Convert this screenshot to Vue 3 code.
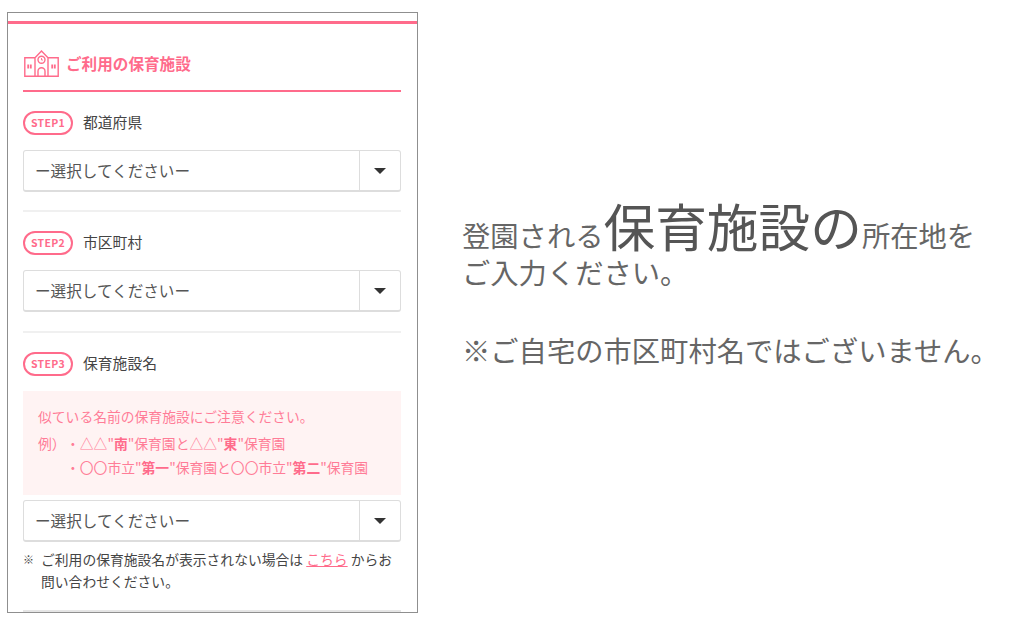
<script setup>
const note = 'ー選択してくださいー'
</script>

<template>
  <div class="page">
    <section class="card">
      <div class="topline"></div>
      <h2 class="title">
        <svg class="school" viewBox="0 0 35 27" fill="none" stroke="#ff6b8b" stroke-width="1.4">
          <path d="M11 7.7H.8v18.6h33.4V7.7H24M11 26.3V7.8L17.5 1 24 7.8v18.5" />
          <circle cx="17.5" cy="9.8" r="3.5" />
          <path d="M17.5 8v2h1.5" stroke-width=".9" />
          <path d="M14 26.3v-5a3.5 3.5 0 0 1 7 0v5" />
          <path d="M4.2 14.5v4M6.8 14.5v4M28.2 14.5v4M30.8 14.5v4" stroke-width="1.8" />
        </svg>
        <span>ご利用の保育施設</span>
      </h2>

      <div class="step first">
        <div class="step-head"><span class="badge">STEP1</span><span class="label">都道府県</span></div>
        <div class="select"><span class="value">{{ note }}</span><span class="arrow"><i></i></span></div>
      </div>

      <div class="step second">
        <div class="step-head"><span class="badge">STEP2</span><span class="label">市区町村</span></div>
        <div class="select"><span class="value">{{ note }}</span><span class="arrow"><i></i></span></div>
      </div>

      <div class="step last">
        <div class="step-head"><span class="badge">STEP3</span><span class="label">保育施設名</span></div>
        <div class="caution">
          <p class="c1">似ている名前の保育施設にご注意ください。</p>
          <p class="c2"><span class="rei">例）</span><span>・△△"<b>南</b>"保育園と△△"<b>東</b>"保育園</span></p>
          <p class="c3"><span>・〇〇市立"<b>第一</b>"保育園と〇〇市立"<b>第二</b>"保育園</span></p>
        </div>
        <div class="select tight"><span class="value">{{ note }}</span><span class="arrow"><i></i></span></div>
        <p class="foot"><span class="mark">※</span><span>ご利用の保育施設名が表示されない場合は <a>こちら</a> からお問い合わせください。</span></p>
      </div>
      <div class="tail"></div>
    </section>

    <section class="message">
      <p class="m1">登園される<span class="big">保育施設の</span>所在地を<br>ご入力ください。</p>
      <p class="m2">※ご自宅の市区町村名ではございません。</p>
    </section>
  </div>
</template>

<style>
html, body { margin: 0; background: #fff; }
</style>

<style scoped>
.page {
  width: 1014px;
  height: 624px;
  box-sizing: border-box;
  padding: 12px 0 0 7px;
  display: flex;
  overflow: hidden;
  font-family: "Noto Sans CJK JP", "Noto Sans", sans-serif;
  color: #444;
}
p, h2 { margin: 0; font-weight: normal; }

.card {
  width: 411px;
  height: 601px;
  flex: none;
  box-sizing: border-box;
  border: 1px solid #8f8f8f;
  padding: 8px 16px 0 15px;
  overflow: hidden;
  background: #fff;
}
.topline {
  height: 3px;
  margin: 0 -16px 0 -15px;
  background: #ff6b8b;
}
.title {
  height: 68px;
  border-bottom: 2px solid #ff6b8b;
  box-sizing: border-box;
  display: flex;
  align-items: center;
  gap: 7px;
  padding: 12px 0 0 1px;
  color: #ff6b8b;
  font-size: 15.6px;
  font-weight: 700;
  line-height: 20px;
}
.school { width: 35px; height: 27px; flex: none; }

.step { padding: 19px 0 18px; border-bottom: 2px solid #f0f0f0; }
.step.second { padding-bottom: 19px; }
.step.last { border-bottom: 0; padding-bottom: 0; }

.step-head { display: flex; align-items: center; gap: 10px; height: 24px; }
.badge {
  width: 50px;
  height: 24px;
  box-sizing: border-box;
  border: 2px solid #ff6b8b;
  border-radius: 12px;
  color: #ff6b8b;
  font-size: 10.5px;
  font-weight: 700;
  line-height: 20px;
  text-align: center;
  letter-spacing: .3px;
}
.label { font-size: 14.8px; line-height: 18px; padding-bottom: 2px; font-weight: 400; color: #444; }

.select {
  margin-top: 15px;
  height: 42px;
  box-sizing: border-box;
  border: 1px solid #ddd;
  border-bottom-width: 2px;
  border-radius: 3px;
  display: flex;
  background: #fff;
}
.select.tight { margin-top: 5px; }
.value {
  flex: 1;
  padding-left: 11px;
  font-size: 15.6px;
  line-height: 39px;
  color: #555;
}
.arrow {
  width: 40px;
  border-left: 1px solid #ddd;
  display: flex;
  align-items: center;
  justify-content: center;
}
.arrow i {
  width: 0;
  height: 0;
  border-left: 6px solid transparent;
  border-right: 6px solid transparent;
  border-top: 6px solid #333;
}

.caution {
  margin-top: 15px;
  height: 104px;
  box-sizing: border-box;
  padding-top: 15px;
  background: #fff3f3;
  color: #ff7c97;
  font-size: 13.8px;
  line-height: 20px;
}
.caution p { padding-left: 15px; white-space: nowrap; }
.caution .c2 { margin-top: 7px; }
.caution .c3 { margin-top: 4px; padding-left: 43px; }
.caution .rei { display: inline-block; width: 28px; }
.caution b { font-weight: 700; color: #ff6b8b; }

.foot {
  margin-top: 6px;
  display: flex;
  font-size: 13.8px;
  line-height: 22px;
  color: #444;
}
.mark { width: 18px; flex: none; font-size: 11px; }
.foot a { color: #ff6b8b; text-decoration: underline; }

.tail { margin-top: 18px; height: 2px; background: #e5e5e5; }

.message {
  margin-left: 44px;
  padding-top: 194px;
  color: #666;
  font-size: 28.3px;
  white-space: nowrap;
}
.m1 { line-height: 37px; }
.big { font-size: 51.7px; line-height: 37px; color: #555; }
.m2 { margin-top: 40px; line-height: 40px; }
</style>
